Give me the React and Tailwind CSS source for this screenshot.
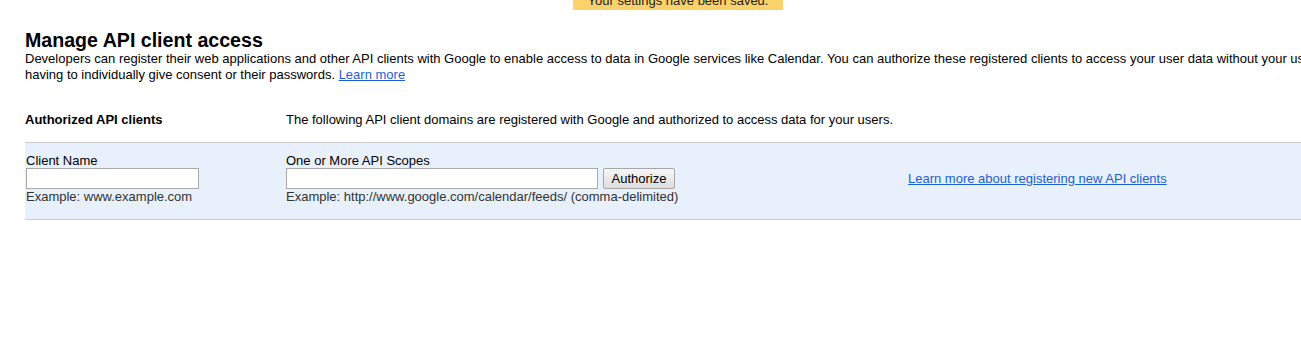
// Manage API client access page (Google Apps admin, legacy)

export default function App() {
  return (
    <div className="w-full h-[357px] overflow-hidden bg-white font-['Liberation_Sans',Arial,sans-serif] text-black">
      <div className="w-[1400px]">
        {/* Saved banner, scrolled half off the top */}
        <div className="flex pl-[573px]">
          <div className="-mt-[8px] h-[18px] w-[210px] bg-[#f9d26b] text-center text-[13px] leading-[18px] text-[#222]">
            Your settings have been saved.
          </div>
        </div>

        <div className="px-[25px]">
          {/* Title and description */}
          <h1 className="mt-[19px] text-[19.6px] leading-[22px] font-bold">Manage API client access</h1>
          <p className="text-[13px] leading-[16px] whitespace-nowrap">
            Developers can register their web applications and other API clients with Google to enable access to data in Google services like Calendar. You can authorize these registered clients to access your user data without your users
            <br />
            having to individually give consent or their passwords.{" "}
            <a href="#" className="text-[#1a5fd6] underline">Learn more</a>
          </p>

          {/* Section header */}
          <div className="mt-[29px] flex text-[13px] leading-[16px]">
            <div className="w-[261px] font-bold">Authorized API clients</div>
            <div>The following API client domains are registered with Google and authorized to access data for your users.</div>
          </div>

          {/* Add client row */}
          <div className="mt-[14px] flex items-center border-y border-[#cccccc] bg-[#e8f0fb] pt-[10px] pb-[14px] text-[13px] leading-[16px]">
            <div className="w-[261px] pl-[1px]">
              <div className="h-[15px]">Client Name</div>
              <input type="text" className="block h-[21px] w-[173px] border border-[#a9a9a9] bg-white px-[2px] text-[13px] outline-none" />
              <div className="text-[#333]">Example: www.example.com</div>
            </div>

            <div className="w-[622px]">
              <div className="h-[15px]">One or More API Scopes</div>
              <div className="flex items-center gap-[5px]">
                <input type="text" className="block h-[21px] w-[312px] border border-[#a9a9a9] bg-white px-[2px] text-[13px] outline-none" />
                <button className="h-[21px] w-[72px] rounded-[2px] border border-[#a6a6a6] bg-gradient-to-b from-[#f6f6f6] to-[#dedede] text-[13px] leading-[19px] text-black">
                  Authorize
                </button>
              </div>
              <div className="text-[#333]">Example: http://www.google.com/calendar/feeds/ (comma-delimited)</div>
            </div>

            <div>
              <a href="#" className="text-[#1a5fd6] underline">Learn more about registering new API clients</a>
            </div>
          </div>
        </div>
      </div>
    </div>
  );
}
